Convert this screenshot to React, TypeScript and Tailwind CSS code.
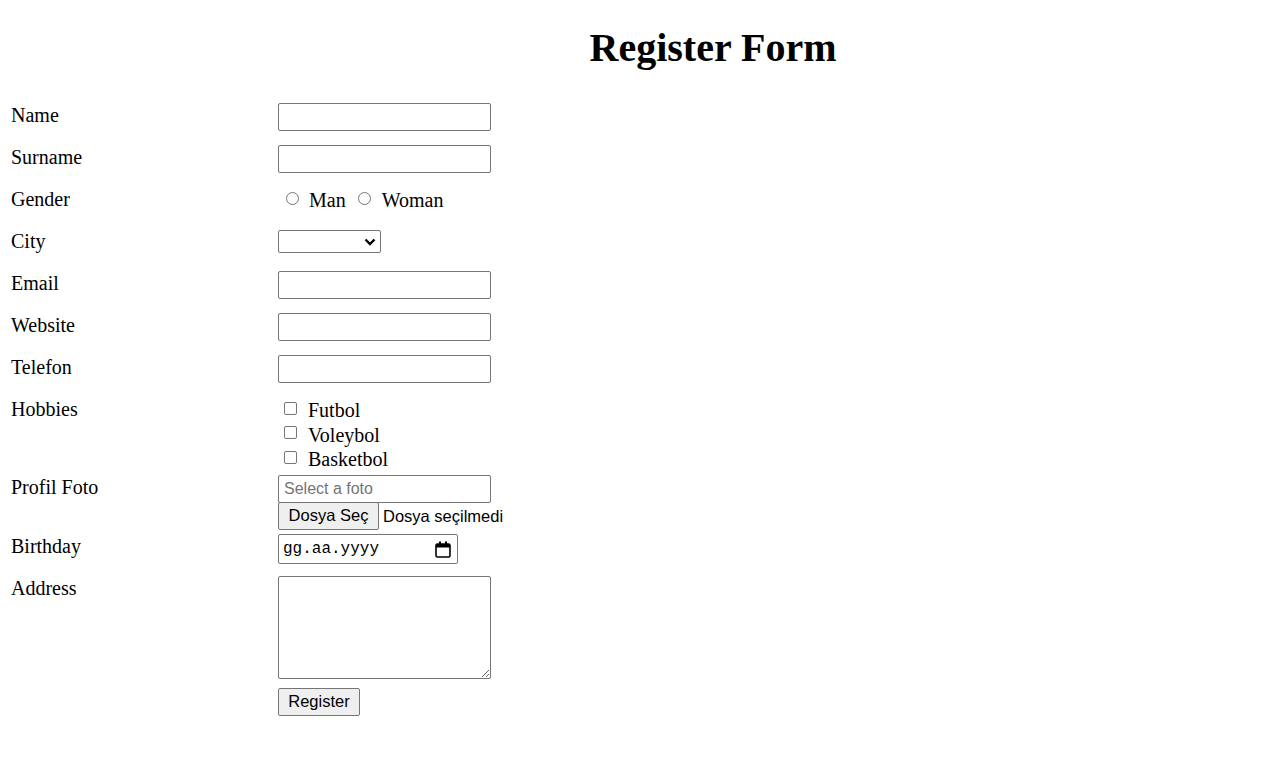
import React from "react";

const inputCls =
  "block w-[213px] h-[28px] border border-[#767676] rounded-[2px] bg-white px-[5px] font-['Liberation_Sans',Arial,sans-serif] text-[16px] text-black placeholder:text-[#757575]";

const btnCls =
  "block h-[28px] border border-[#767676] rounded-[2px] bg-[#efefef] px-0 pb-[1px] text-center whitespace-nowrap font-['Liberation_Sans',Arial,sans-serif] text-[16.5px] text-black leading-none";

function Row({ label, h, children }: { label: string; h: number; children?: React.ReactNode }) {
  return (
    <div className="flex items-start" style={{ height: h }}>
      <div className="w-[267px] shrink-0 pt-[1px] text-[20px] leading-[23px]">{label}</div>
      <div>{children}</div>
    </div>
  );
}

function CalendarIcon() {
  return (
    <svg width="16" height="17" viewBox="0 0 16 17" fill="none">
      <rect x="4" y="0.5" width="2" height="3" fill="#000" />
      <rect x="10" y="0.5" width="2" height="3" fill="#000" />
      <rect x="1" y="3" width="14" height="13" rx="1.5" stroke="#000" strokeWidth="1.6" fill="none" />
      <rect x="1" y="3" width="14" height="3.5" fill="#000" />
    </svg>
  );
}

const Radio = ({ cls }: { cls: string }) => (
  <span className={"block w-[13px] h-[13px] shrink-0 rounded-full border border-[#767676] bg-white " + cls} />
);

const Check = ({ cls }: { cls: string }) => (
  <span className={"block w-[13px] h-[13px] shrink-0 rounded-[2px] border border-[#767676] bg-white " + cls} />
);

export default function App() {
  return (
    <div className="min-h-screen bg-white text-black font-['Liberation_Serif','Times_New_Roman',serif]">
      <h1 className="pt-[25px] pl-[140px] text-center text-[40px] font-bold leading-[46px]">Register Form</h1>

      <form className="mt-[32px] pl-[11px]" onSubmit={(e) => e.preventDefault()}>
        <Row label="Name" h={42}>
          <input type="text" className={inputCls} />
        </Row>
        <Row label="Surname" h={42}>
          <input type="text" className={inputCls} />
        </Row>
        <Row label="Gender" h={42}>
          <div className="flex items-start text-[20px] leading-[23px]">
            <Radio cls="ml-[8px] mt-[5px]" />
            <span className="ml-[10px] mt-[2px]">Man</span>
            <Radio cls="ml-[12px] mt-[5px]" />
            <span className="ml-[11px] mt-[2px]">Woman</span>
          </div>
        </Row>
        <Row label="City" h={42}>
          <div className="mt-[1px] flex items-center justify-end w-[103px] h-[23px] border border-[#767676] rounded-[2px] bg-white pr-[4px]">
            <svg width="12" height="8" viewBox="0 0 12 8">
              <polyline points="1.5,1.5 6,6 10.5,1.5" fill="none" stroke="#000" strokeWidth="2.4" />
            </svg>
          </div>
        </Row>
        <Row label="Email" h={42}>
          <input type="email" className={inputCls} />
        </Row>
        <Row label="Website" h={42}>
          <input type="text" className={inputCls} />
        </Row>
        <Row label="Telefon" h={42}>
          <input type="text" className={inputCls} />
        </Row>
        <Row label="Hobbies" h={78}>
          <div className="pt-[2px] text-[20px] leading-[23px]">
            {["Futbol", "Voleybol", "Basketbol"].map((h) => (
              <div key={h} className="flex items-start h-[24.5px]">
                <Check cls="ml-[6px] mt-[2.5px]" />
                <span className="ml-[11px]">{h}</span>
              </div>
            ))}
          </div>
        </Row>
        <Row label="Profil Foto" h={59}>
          <input type="text" placeholder="Select a foto" className={inputCls} />
          <div className="flex items-center -mt-[1px] font-['Liberation_Sans',Arial,sans-serif] text-[16.5px]">
            <button type="button" className={btnCls + " w-[101px]"}>
              Dosya Seç
            </button>
            <span className="ml-[4px] whitespace-nowrap">Dosya seçilmedi</span>
          </div>
        </Row>
        <Row label="Birthday" h={42}>
          <div className="flex items-center justify-between w-[180px] h-[30px] border border-[#767676] rounded-[2px] bg-white pl-[4px] pr-[6px]">
            <span className="font-['Liberation_Mono','Courier_New',monospace] text-[16px]">gg.aa.yyyy</span>
            <CalendarIcon />
          </div>
        </Row>
        <Row label="Address" h={112}>
          <textarea className="block w-[213px] h-[103px] border border-[#767676] rounded-[2px] bg-white resize" />
        </Row>
        <div className="pl-[267px]">
          <button type="submit" className={btnCls + " w-[82px]"}>
            Register
          </button>
        </div>
      </form>
    </div>
  );
}
